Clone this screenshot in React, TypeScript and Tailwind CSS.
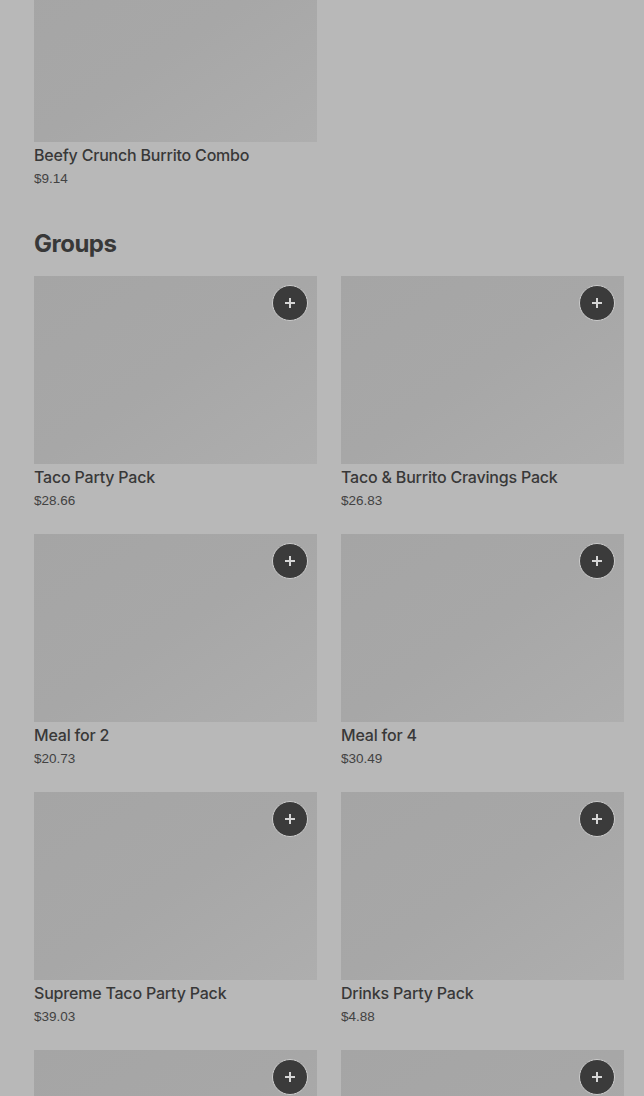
import React from "react";

type Item = { title: string; price: string };

const groups: Item[] = [
    { title: "Taco Party Pack", price: "$28.66" },
    { title: "Taco & Burrito Cravings Pack", price: "$26.83" },
    { title: "Meal for 2", price: "$20.73" },
    { title: "Meal for 4", price: "$30.49" },
    { title: "Supreme Taco Party Pack", price: "$39.03" },
    { title: "Drinks Party Pack", price: "$4.88" },
    { title: "Family Taco Box", price: "$24.19" },
    { title: "Nachos Party Pack", price: "$22.57" },
];

const PlusIcon = () => (
    <svg width="12" height="12" viewBox="0 0 12 12" fill="none">
        <path d="M6 1v10M1 6h10" stroke="#d6d6d6" strokeWidth="2" />
    </svg>
);

const ItemCard = ({ item, showAdd = true }: { item: Item; showAdd?: boolean }) => {
    return (
        <div className="flex flex-col">
            <div className="relative h-[188px] w-full bg-gradient-to-br from-[#a5a5a5] via-[#a7a7a7] to-[#aeaeae]">
                {showAdd && (
                    <button className="absolute right-[9px] top-[9px] flex h-9 w-9 items-center justify-center rounded-full border border-[#cdcdcd] bg-[#3b3b3b]">
                        <PlusIcon />
                    </button>
                )}
            </div>
            <div className="mt-[1px] text-[16px] font-medium leading-6 tracking-[-0.2px] text-[#383838]">
                {item.title}
            </div>
            <div className="mt-[2px] font-['Liberation_Sans',sans-serif] text-[13.5px] leading-5 text-[#424242]">
                {item.price}
            </div>
        </div>
    );
};

export default function App() {
    return (
        <div className="h-[1096px] overflow-hidden bg-[#b8b8b8] font-['Inter',sans-serif]">
            <div className="-mt-[46px] pl-[34px] pr-[20px]">
                <div className="grid grid-cols-2 gap-x-6">
                    <ItemCard
                        item={{ title: "Beefy Crunch Burrito Combo", price: "$9.14" }}
                        showAdd={false}
                    />
                </div>

                <h2 className="mt-[39px] mb-[16px] text-[24px] font-bold leading-8 tracking-[-0.5px] text-[#383838]">
                    Groups
                </h2>

                <div className="grid grid-cols-2 gap-x-6 gap-y-[23px]">
                    {groups.map((item) => (
                        <ItemCard key={item.title} item={item} />
                    ))}
                </div>
            </div>
        </div>
    );
}
